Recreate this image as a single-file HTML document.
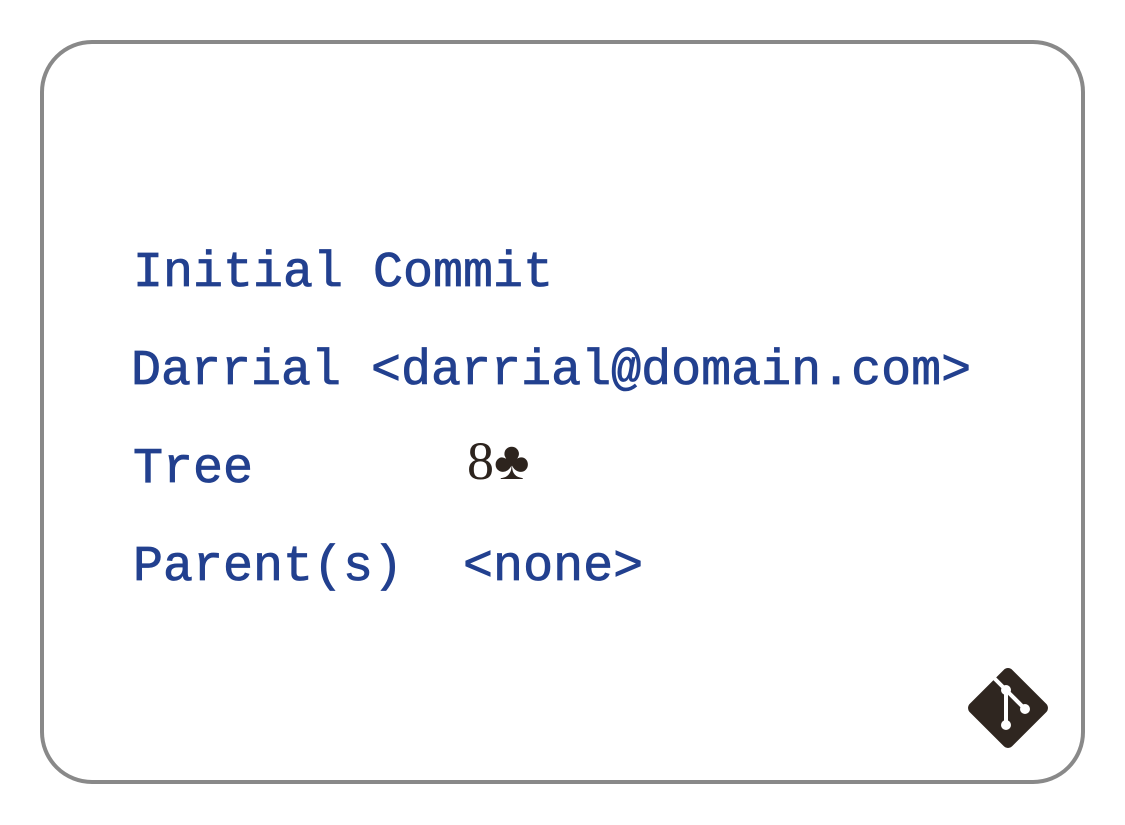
<!DOCTYPE html>
<html><head><style>
html,body{margin:0;padding:0;background:#fff;width:1125px;height:825px;overflow:hidden}
.card{position:absolute;left:40px;top:40px;width:1037px;height:736px;border:4px solid #898989;border-radius:52px;box-sizing:content-box}
.t{position:absolute;left:133px;font-family:"Liberation Mono",monospace;font-weight:normal;font-size:50px;color:#22408f;white-space:pre;line-height:1;-webkit-text-stroke:0.8px #22408f}
.s{position:absolute;left:467px;top:434px;font-family:"Liberation Serif",serif;color:#2d241e;font-size:54px;line-height:1;white-space:pre}
</style></head><body>
<div class="card"></div>
<div class="t" style="top:249px">Initial Commit</div>
<div class="t" style="top:347px;left:131px">Darrial &lt;darrial@domain.com&gt;</div>
<div class="t" style="top:445px">Tree</div>
<div class="s">8♣</div>
<div class="t" style="top:543px">Parent(s)  &lt;none&gt;</div>
<svg style="position:absolute;left:962px;top:662px" width="92" height="92" viewBox="0 0 92 92">
<rect x="16" y="16" width="60" height="60" rx="6" transform="rotate(45 46 46)" fill="#2f2620"/>
<g stroke="#fff" stroke-width="4" fill="none" stroke-linecap="round">
<line x1="30" y1="14" x2="44" y2="28"/>
<line x1="44" y1="28" x2="62" y2="46"/>
<line x1="44" y1="28" x2="44" y2="63"/>
</g>
<circle cx="44" cy="28" r="5" fill="#fff"/>
<circle cx="63" cy="47" r="5" fill="#fff"/>
<circle cx="44" cy="63" r="5" fill="#fff"/>
</svg>
</body></html>
